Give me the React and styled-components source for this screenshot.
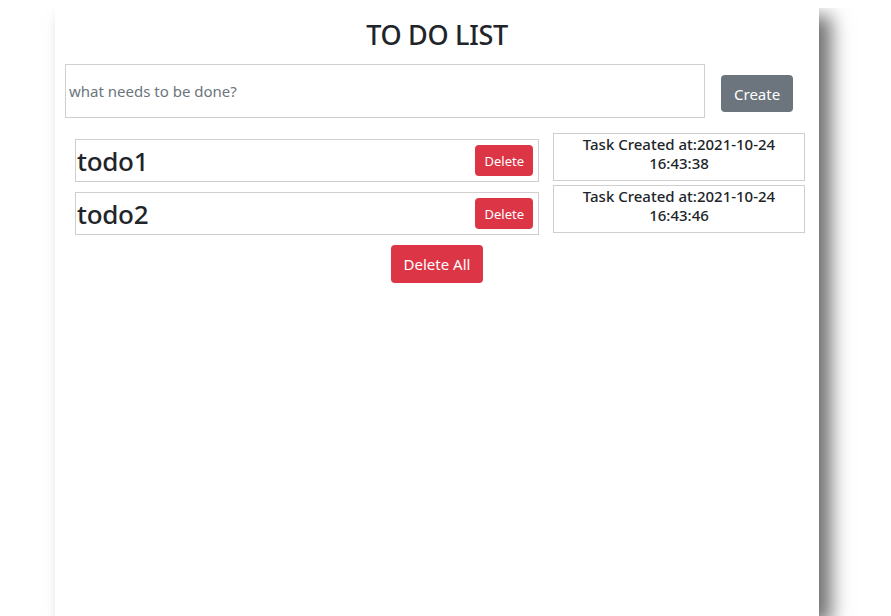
import React, { useState } from 'react'
import styled, { createGlobalStyle } from 'styled-components'

const GlobalStyle = createGlobalStyle`
  body {
    margin: 8px 0 0 0;
    background: #fff;
    font-family: "Noto Sans", "Open Sans", sans-serif;
    color: #212529;
  }
`

const Page = styled.div`
  width: 874px;
`

const Card = styled.div`
  width: 764px;
  min-height: 608px;
  margin: 0 auto;
  background: #fff;
  box-shadow: 12px 8px 18px #6f6f6f;
  padding-top: 5px;
  box-sizing: border-box;
`

const Title = styled.h3`
  margin: 0 0 8px;
  text-align: center;
  font-size: 27px;
  font-weight: 500;
  line-height: 1.6;
  letter-spacing: -0.3px;
`

const InputRow = styled.div`
  display: flex;
  align-items: flex-start;
  gap: 16px;
  padding: 0 10px;
`

const TaskInput = styled.input`
  width: 640px;
  height: 54px;
  box-sizing: border-box;
  border: 1px solid #cfcfcf;
  padding: 0 3px;
  font-family: inherit;
  font-size: 15px;
  color: #212529;
  outline: none;
  &::placeholder {
    color: #6c757d;
  }
`

const Button = styled.button`
  border: none;
  border-radius: 4px;
  color: #fff;
  font-family: inherit;
  background: ${p => (p.$variant === 'secondary' ? '#6c757d' : '#dc3545')};
  font-size: ${p => (p.$small ? '13px' : '15px')};
  height: ${p => p.$h}px;
  padding: 0 ${p => p.$px}px;
  cursor: pointer;
`

const CreateButton = styled(Button)`
  margin-top: 11px;
`

const ListArea = styled.div`
  display: grid;
  grid-template-columns: 464px 252px;
  column-gap: 14px;
  padding: 15px 14px 0 20px;
`

const TodoColumn = styled.div`
  display: flex;
  flex-direction: column;
  gap: 10px;
  padding-top: 6px;
`

const TodoRow = styled.div`
  display: flex;
  align-items: center;
  justify-content: space-between;
  height: 43px;
  box-sizing: border-box;
  border: 1px solid #cfcfcf;
  padding: 0 5px 0 1px;
`

const TodoText = styled.span`
  font-size: 26px;
  font-weight: 500;
  letter-spacing: -0.3px;
`

const StampColumn = styled.div`
  display: flex;
  flex-direction: column;
  gap: 4px;
`

const Stamp = styled.div`
  height: 48px;
  box-sizing: border-box;
  border: 1px solid #cfcfcf;
  text-align: center;
  font-size: 15px;
  font-weight: 500;
  line-height: 19px;
  padding-top: 1px;
`

const Footer = styled.div`
  display: flex;
  justify-content: center;
  padding-top: 10px;
`

const initial = [
  { id: 1, text: 'todo1', created: '2021-10-24 16:43:38' },
  { id: 2, text: 'todo2', created: '2021-10-24 16:43:46' },
]

export default function App() {
  const [todos] = useState(initial)
  return (
    <Page>
      <GlobalStyle />
      <Card>
        <Title>TO DO LIST</Title>
        <InputRow>
          <TaskInput placeholder="what needs to be done?" />
          <CreateButton $variant="secondary" $h={37} $px={13}>Create</CreateButton>
        </InputRow>
        <ListArea>
          <TodoColumn>
            {todos.map(todo => (
              <TodoRow key={todo.id}>
                <TodoText>{todo.text}</TodoText>
                <Button $small $h={31} $px={9}>Delete</Button>
              </TodoRow>
            ))}
          </TodoColumn>
          <StampColumn>
            {todos.map(todo => (
              <Stamp key={todo.id}>
                Task Created at:{todo.created.split(' ')[0]}
                <br />
                {todo.created.split(' ')[1]}
              </Stamp>
            ))}
          </StampColumn>
        </ListArea>
        <Footer>
          <Button $h={38} $px={13}>Delete All</Button>
        </Footer>
      </Card>
    </Page>
  )
}
